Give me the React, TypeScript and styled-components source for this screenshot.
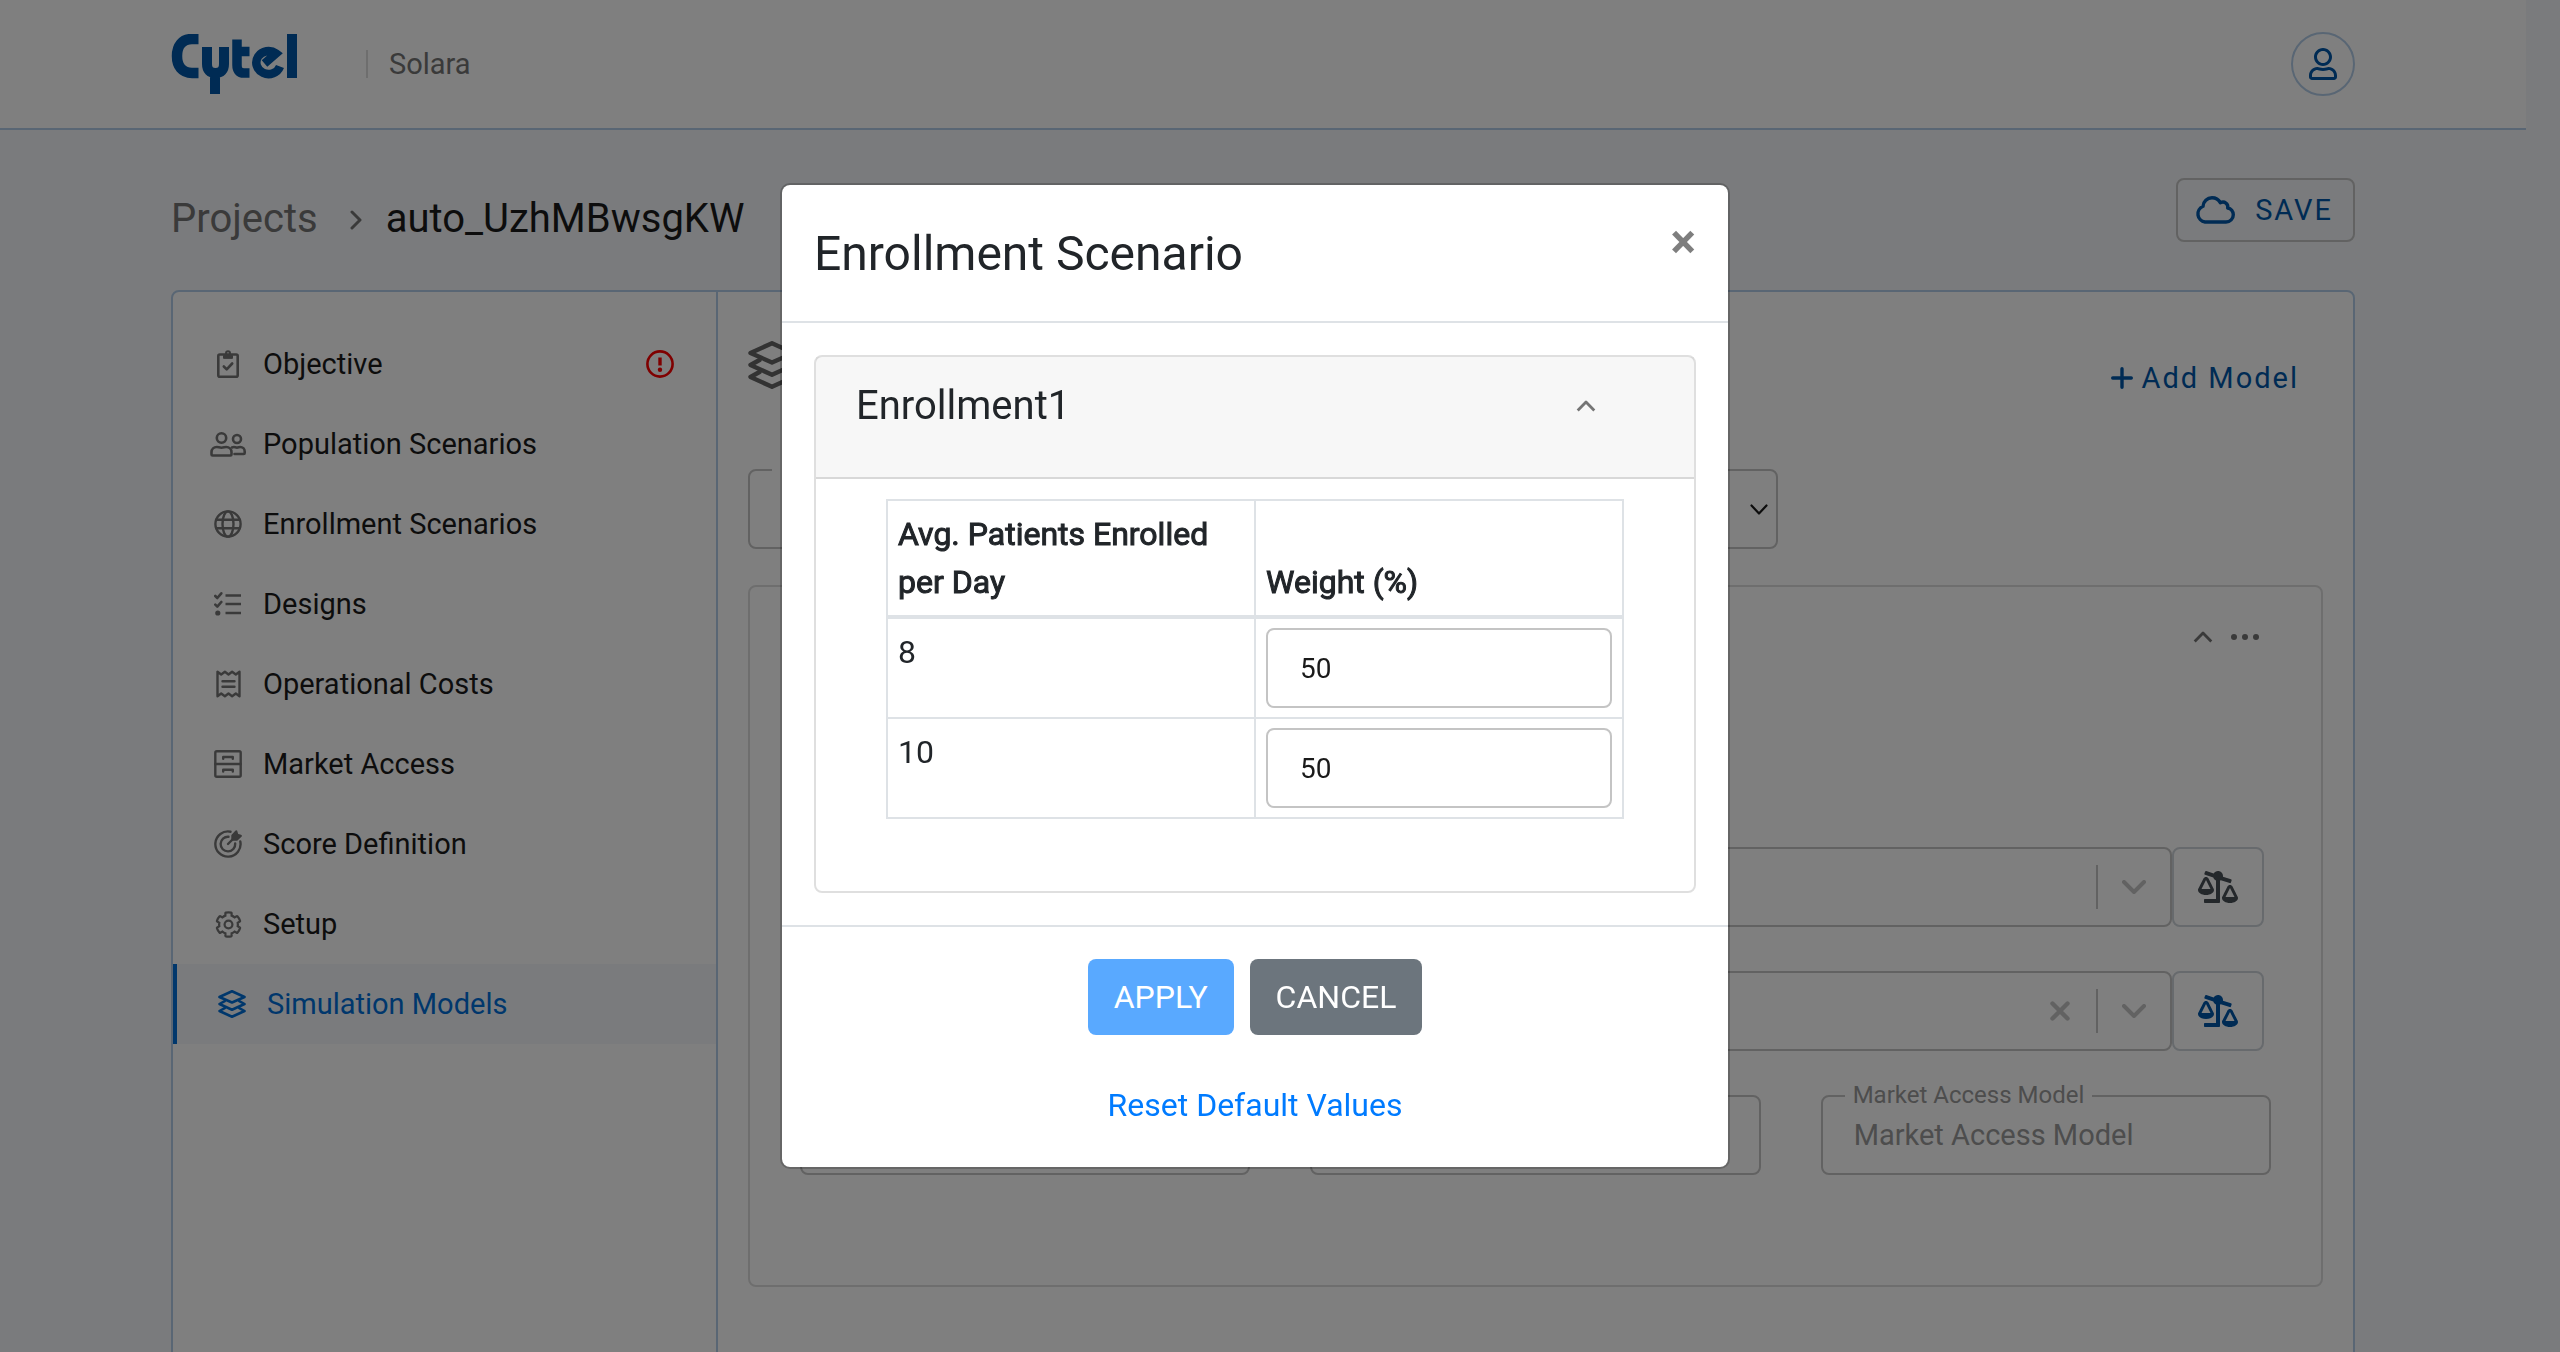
import React from 'react';
import styled, { createGlobalStyle } from 'styled-components';
import { FaBalanceScaleRight, FaCog, FaRegUser } from 'react-icons/fa';

const color = {
  brand: '#0057a8',
  active: '#006fd9',
  line: '#b3cde8',
  page: '#f4f7fa',
  field: '#c4c4c4',
  card: '#dddddd',
  text: '#1a1a1a',
  muted: '#757575',
  grid: '#dee2e6',
  body: '#212529',
};

const GlobalStyle = createGlobalStyle`
  *, *::before, *::after { box-sizing: border-box; }
  html, body { margin: 0; height: 100%; }
  body {
    background: ${color.page};
    color: ${color.text};
    font-family: Roboto, "Liberation Sans", sans-serif;
    font-size: 29px;
    overflow: hidden;
  }
  button, input, select { font-family: inherit; }
  svg { display: block; flex: none; }
`;

/* ---------- page shell ---------- */

const Page = styled.div`
  min-height: 100vh;
  padding-right: 34px;
`;

const Header = styled.header`
  display: flex;
  align-items: center;
  height: 130px;
  padding: 0 171px;
  background: #fff;
  border-bottom: 2px solid ${color.line};
`;

const Product = styled.span`
  display: flex;
  align-items: center;
  gap: 21px;
  margin-left: 69px;
  color: ${color.muted};

  &::before {
    content: '';
    width: 2px;
    height: 28px;
    background: ${color.card};
  }
`;

const UserButton = styled.button`
  display: flex;
  align-items: center;
  justify-content: center;
  width: 64px;
  height: 64px;
  margin-left: auto;
  padding: 0;
  color: ${color.brand};
  background: none;
  border: 2px solid ${color.line};
  border-radius: 50%;
`;

const Content = styled.div`
  padding: 48px 171px 0;
`;

const TitleRow = styled.div`
  display: flex;
  align-items: flex-start;
  justify-content: space-between;
  height: 112px;
`;

const Breadcrumb = styled.nav`
  display: flex;
  align-items: center;
  font-size: 40px;
  line-height: 82px;
  color: ${color.text};

  a {
    color: ${color.muted};
    text-decoration: none;
  }

  svg {
    margin: 2px 24px 0 32px;
    color: ${color.muted};
  }
`;

const SaveButton = styled.button`
  display: flex;
  align-items: center;
  gap: 20px;
  height: 64px;
  padding: 0 20px 0 17px;
  font-size: 29px;
  letter-spacing: 2px;
  color: ${color.brand};
  background: none;
  border: 2px solid ${color.field};
  border-radius: 8px;
`;

const Panel = styled.div`
  display: flex;
  min-height: 1080px;
  background: #fff;
  border: 2px solid ${color.line};
  border-radius: 8px;
`;

/* ---------- side navigation ---------- */

const Sidebar = styled.nav`
  flex: none;
  width: 545px;
  padding-top: 32px;
  border-right: 2px solid ${color.line};
`;

const NavItem = styled.a<{ $active?: boolean }>`
  display: flex;
  align-items: center;
  gap: 16px;
  height: 80px;
  padding: 0 42px 0 36px;
  color: ${(p) => (p.$active ? color.active : color.text)};
  background: ${(p) => (p.$active ? color.page : 'none')};
  border-left: ${(p) => (p.$active ? `4px solid ${color.active}` : '0')};
  text-decoration: none;
`;

const NavIcon = styled.span<{ $active?: boolean }>`
  display: flex;
  justify-content: center;
  width: 38px;
  color: ${(p) => (p.$active ? color.active : color.muted)};
`;

const NavLabel = styled.span`
  flex: 1;
`;

/* ---------- main column ---------- */

const Main = styled.main`
  flex: 1;
  min-width: 0;
  padding: 49px 30px;
`;

const MainHeader = styled.div`
  display: flex;
  align-items: flex-start;
  justify-content: space-between;
  height: 128px;
  color: #666;
`;

const AddButton = styled.button`
  display: flex;
  align-items: center;
  gap: 9px;
  height: 74px;
  padding: 0 24px;
  font-size: 29px;
  letter-spacing: 2px;
  color: ${color.brand};
  background: none;
  border: 0;
`;

const Outline = styled.fieldset`
  position: relative;
  display: flex;
  align-items: center;
  min-width: 0;
  height: 80px;
  margin: 0;
  padding: 0;
  border: 2px solid ${color.field};
  border-radius: 8px;
`;

const ModelPicker = styled(Outline)`
  max-width: 1030px;
  padding-right: 8px;
`;

/* The gap that a floating label leaves in the top line of its field. */
const Notch = styled.span`
  position: absolute;
  top: -14px;
  left: 22px;
  min-width: 180px;
  height: 28px;
  padding: 0 8px;
  font-size: 24px;
  line-height: 24px;
  color: #9a9a9a;
  background: #fff;
`;

const PlainSelect = styled.select`
  flex: 1;
  min-width: 0;
  height: 100%;
  padding: 0 30px;
  font-size: 29px;
  appearance: none;
  background: none;
  border: 0;
`;

const ModelCard = styled.section`
  margin-top: 36px;
  padding: 0 50px 110px;
  border: 2px solid ${color.card};
  border-radius: 8px;
`;

const CardTools = styled.div`
  display: flex;
  align-items: center;
  justify-content: flex-end;
  gap: 18px;
  height: 100px;
  margin-bottom: 160px;
  padding-right: 12px;
`;

const IconButton = styled.button`
  padding: 0;
  color: ${color.muted};
  background: none;
  border: 0;
`;

const ScenarioRow = styled.div`
  display: flex;
  margin-bottom: 44px;
  padding-right: 7px;
`;

const ScenarioField = styled(Outline)`
  flex: 1;
  padding-right: 24px;
  color: ${color.field};
`;

const Separator = styled.span`
  width: 2px;
  height: 44px;
  margin: 0 24px 0 26px;
  background: ${color.field};
`;

const WeightButton = styled.button<{ $on?: boolean }>`
  display: flex;
  align-items: center;
  justify-content: center;
  width: 92px;
  height: 80px;
  padding: 0;
  color: ${(p) => (p.$on ? color.brand : '#495057')};
  background: none;
  border: 2px solid #ced4da;
  border-radius: 8px;

  svg {
    width: 40px;
    height: 32px;
  }
`;

const FieldRow = styled.div`
  display: grid;
  grid-template-columns: repeat(3, 1fr);
  gap: 60px;
`;

const FieldInput = styled.input`
  width: 100%;
  height: 100%;
  padding: 0 31px;
  font-size: 29px;
  color: #9a9a9a;
  background: none;
  border: 0;
`;

/* ---------- modal ---------- */

const Backdrop = styled.div`
  position: fixed;
  inset: 0;
  display: flex;
  align-items: center;
  justify-content: center;
  padding-right: 50px;
  background: rgba(0, 0, 0, 0.5);
`;

const Dialog = styled.div`
  width: 950px;
  max-width: 100%;
  font-size: 32px;
  line-height: 48px;
  color: ${color.body};
  background: #fff;
  background-clip: padding-box;
  border: 2px solid rgba(0, 0, 0, 0.2);
  border-radius: 10px;
`;

const DialogHeader = styled.div`
  display: flex;
  align-items: flex-start;
  justify-content: space-between;
  padding: 33px 32px 31px;
  border-bottom: 2px solid ${color.grid};

  h4 {
    margin: 0;
    font-size: 48px;
    font-weight: 400;
    line-height: 72px;
  }
`;

const CloseButton = styled.button`
  padding: 0;
  font-size: 48px;
  font-weight: 700;
  line-height: 48px;
  color: #000;
  background: none;
  border: 0;
  opacity: 0.5;
`;

const DialogBody = styled.div`
  padding: 32px;
`;

const Accordion = styled.div`
  border: 2px solid rgba(0, 0, 0, 0.125);
  border-radius: 8px;
`;

const AccordionHeader = styled.div`
  display: flex;
  justify-content: space-between;
  align-items: center;
  padding: 25px 98px 47px 40px;
  background: rgba(0, 0, 0, 0.03);
  border-bottom: 2px solid rgba(0, 0, 0, 0.125);

  h5 {
    margin: 0;
    font-size: 40px;
    font-weight: 400;
    line-height: 48px;
  }
`;

const AccordionBody = styled.div`
  padding: 20px 70px 72px;
`;

const WeightTable = styled.table`
  width: 100%;
  table-layout: fixed;
  border-collapse: separate;
  border-spacing: 0;
  border-top: 2px solid ${color.grid};
  border-left: 2px solid ${color.grid};

  th,
  td {
    padding: 9px 10px;
    text-align: left;
    vertical-align: top;
    border-right: 2px solid ${color.grid};
    border-bottom: 2px solid ${color.grid};
  }

  th {
    font-weight: 400;
    -webkit-text-stroke: 1px ${color.body};
    vertical-align: bottom;
    border-bottom-width: 4px;
  }
`;

const WeightInput = styled.input`
  display: block;
  width: 100%;
  height: 80px;
  padding: 0 32px;
  font-size: 28px;
  color: ${color.text};
  background: #fff;
  border: 2px solid ${color.field};
  border-radius: 8px;
`;

const DialogFooter = styled.div`
  display: flex;
  flex-direction: column;
  align-items: center;
  gap: 32px;
  padding: 32px 32px 24px;
  border-top: 2px solid ${color.grid};
`;

const ButtonGroup = styled.div`
  display: flex;
  gap: 16px;
`;

const Button = styled.button<{ $tone: 'primary' | 'secondary' | 'link' }>`
  height: 76px;
  padding: 0 26px;
  font-size: 32px;
  line-height: 48px;
  color: ${(p) => (p.$tone === 'link' ? '#007bff' : '#fff')};
  background: ${(p) =>
    p.$tone === 'primary' ? '#007bff' : p.$tone === 'secondary' ? '#6c757d' : 'none'};
  border: 0;
  border-radius: 8px;

  &:disabled {
    opacity: 0.65;
  }
`;

/* ---------- drawings ---------- */

const Line = ({
  w,
  h,
  stroke = 2.6,
  size,
  children,
}: {
  w: number;
  h: number;
  stroke?: number;
  size?: number;
  children: React.ReactNode;
}) => (
  <svg
    width={size ? (size * w) / h : w}
    height={size ?? h}
    viewBox={`0 0 ${w} ${h}`}
    fill="none"
    stroke="currentColor"
    strokeWidth={stroke}
    strokeLinecap="round"
    strokeLinejoin="round"
    aria-hidden="true"
  >
    {children}
  </svg>
);

const Logo = () => (
  <svg width="126" height="60" viewBox="0 0 126 60" fill="none" stroke={color.brand} role="img" aria-label="Cytel">
    <path d="M27.5 5H21C11 5 6 12 6 22s5 17 15 17h6.500" strokeWidth="10.500" />
    <path d="M36 13v17c0 6 3 9 8.500 9s8.500-3 8.500-9V13M44 38v22" strokeWidth="10" />
    <path d="M66 5.500V31c0 5 2 8 7 8h5.500M66 17.500h12.500" strokeWidth="9.500" />
    <path d="M109 32.500A12.200 11.500 0 1 1 105 19.500L93.500 29.500" strokeWidth="8.500" />
    <path d="M121 0v44" strokeWidth="10" />
  </svg>
);

const LayersIcon = ({ size }: { size: number }) => (
  <Line w={48} h={48} stroke={4.4} size={size}>
    <path d="M24 2.200 45.500 12 24 21.500 2.500 12z" />
    <path d="M11.500 19 2.500 24 24 33.800 45.500 24l-9-5" />
    <path d="M11.500 31 2.500 36 24 45.800 45.500 36l-9-5" />
  </Line>
);

const ClipboardIcon = () => (
  <Line w={22} h={28}>
    <rect x="1.300" y="4.500" width="19.400" height="22.200" rx="1.500" />
    <path d="M6.500 8V5.500h9V8z" fill="currentColor" strokeWidth="1" />
    <circle cx="11" cy="3.200" r="2" strokeWidth="2" />
    <path d="m6.800 16.500 2.900 2.900 5.500-5.900" />
  </Line>
);

const PeopleIcon = () => (
  <Line w={36} h={28}>
    <circle cx="11.500" cy="8" r="4.700" />
    <path d="M1.500 24.500v-2.200c0-3.300 2.400-5.300 5.300-5.300 1.500 0 2.600.8 4.700.8s3.200-.8 4.700-.8c2.900 0 5.300 2 5.300 5.300v2.200c0 .6-.4 1-1 1H2.500c-.6 0-1-.4-1-1z" />
    <circle cx="27" cy="9" r="4" />
    <path d="M22 17.500c.6-.3 1.200-.5 1.900-.5 1.100 0 1.700.6 3.100.6s2-.6 3.100-.6c2.600 0 4.600 1.900 4.600 4.600v1.400c0 .6-.4 1-1 1h-9.200" />
  </Line>
);

const GlobeIcon = () => (
  <Line w={28} h={28} stroke={2.4}>
    <circle cx="14" cy="14" r="12.600" />
    <ellipse cx="14" cy="14" rx="5.500" ry="12.600" />
    <path d="M2.500 9.800h23M2.500 18.200h23" />
  </Line>
);

const ChecklistIcon = () => (
  <Line w={28} h={28}>
    <path d="M11.500 5.500H27M11.500 14H27M11.500 23H27" strokeLinecap="butt" />
    <path d="m1.300 6 2 2 4-4.700M1.300 14.700l2 2 4-4.700" />
    <circle cx="3.800" cy="23" r="1.300" fill="currentColor" />
  </Line>
);

const ReceiptIcon = () => (
  <Line w={25} h={28} stroke={2.4}>
    <path d="M1.500 1.700v24.600l3.700-2.800 3.700 2.800 3.600-2.800 3.600 2.800 3.700-2.800 3.700 2.800V1.700l-3.700 2.800-3.700-2.800-3.600 2.800-3.600-2.800-3.700 2.800z" />
    <path d="M6.500 11.200h12M6.500 16.800h12" />
  </Line>
);

const CabinetIcon = () => (
  <Line w={28} h={28} stroke={2.4}>
    <rect x="1.300" y="1.300" width="25.400" height="25.400" rx="1.500" />
    <path d="M1.300 14h25.400M9.200 8.800V7h9.600v1.800M9.200 21.500v-1.800h9.600v1.800" />
  </Line>
);

const TargetIcon = () => (
  <Line w={28} h={28} stroke={2.4}>
    <path d="M16.500 1.700A12.600 12.600 0 1 0 26.300 11.500" />
    <path d="M14.500 6.800a7.300 7.300 0 1 0 6.700 6.700" />
    <path d="m14 14 7-7" />
    <path d="m18.500 5.500 3.700-4 1 3.300 3.500 1-4 3.700h-4.200z" fill="currentColor" />
  </Line>
);

const AlertIcon = () => (
  <svg width="28" height="28" viewBox="0 0 28 28" fill="none" stroke="#f00" role="img" aria-label="Needs attention">
    <circle cx="14" cy="14" r="12.600" strokeWidth="2.600" />
    <path d="M14 7.500v8" strokeWidth="3.400" />
    <circle cx="14" cy="19.700" r="2.200" fill="#f00" stroke="none" />
  </svg>
);

const CloudIcon = () => (
  <Line w={40} h={28} stroke={3.4}>
    <path d="M10 26a8.200 8.200 0 0 1-2-15.700C8.300 5.300 12.200 1.800 17 1.800c3.600 0 6.600 1.800 8.300 4.900 4.200-2 8.300 1.100 7.400 5.300 3.400.6 5.600 3.400 5.600 6.800 0 4-3.200 7.200-7.300 7.200z" />
  </Line>
);

const ChevronUp = () => (
  <Line w={20} h={12} stroke={2.8}>
    <path d="m1.700 10.500 8.300-8.500 8.300 8.500" strokeLinecap="butt" />
  </Line>
);

const ClearIcon = () => (
  <Line w={20} h={20} stroke={4.4}>
    <path d="m2.500 2.500 15 15m0-15-15 15" stroke={color.field} />
  </Line>
);

const CogIcon = () => (
  <FaCog size={25} fill="none" strokeWidth={46} overflow="visible" aria-hidden="true" />
);

/* ---------- data ---------- */

const navItems = [
  { label: 'Objective', icon: <ClipboardIcon />, alert: true },
  { label: 'Population Scenarios', icon: <PeopleIcon /> },
  { label: 'Enrollment Scenarios', icon: <GlobeIcon /> },
  { label: 'Designs', icon: <ChecklistIcon /> },
  { label: 'Operational Costs', icon: <ReceiptIcon /> },
  { label: 'Market Access', icon: <CabinetIcon /> },
  { label: 'Score Definition', icon: <TargetIcon /> },
  { label: 'Setup', icon: <CogIcon /> },
  { label: 'Simulation Models', icon: <LayersIcon size={28} />, active: true },
];

const weights = [
  { patients: 8, weight: 50 },
  { patients: 10, weight: 50 },
];

const ScenarioSelect = ({ name, clearable }: { name: string; clearable?: boolean }) => (
  <ScenarioRow>
    <ScenarioField>
      <PlainSelect aria-label={name} />
      {clearable && (
        <IconButton type="button" aria-label={`Clear ${name}`}>
          <ClearIcon />
        </IconButton>
      )}
      <Separator />
      <Line w={24} h={14} stroke={4}>
        <path d="m2 2 10 10L22 2" />
      </Line>
    </ScenarioField>
    <WeightButton type="button" $on={clearable} aria-label={`${name} weights`}>
      <FaBalanceScaleRight />
    </WeightButton>
  </ScenarioRow>
);

export default function App() {
  return (
    <>
      <GlobalStyle />
      <Page>
        <Header>
          <Logo />
          <Product>Solara</Product>
          <UserButton type="button" aria-label="Account">
            <FaRegUser size={32} />
          </UserButton>
        </Header>

        <Content>
          <TitleRow>
            <Breadcrumb aria-label="Breadcrumb">
              <a href="#projects">Projects</a>
              <Line w={12} h={20} stroke={3}>
                <path d="m2 2 8 8-8 8" />
              </Line>
              <span>auto_UzhMBwsgKW</span>
            </Breadcrumb>
            <SaveButton type="button">
              <CloudIcon />
              SAVE
            </SaveButton>
          </TitleRow>

          <Panel>
            <Sidebar aria-label="Project sections">
              {navItems.map((item) => (
                <NavItem key={item.label} href="#section" $active={item.active}>
                  <NavIcon $active={item.active}>{item.icon}</NavIcon>
                  <NavLabel>{item.label}</NavLabel>
                  {item.alert && <AlertIcon />}
                </NavItem>
              ))}
            </Sidebar>

            <Main>
              <MainHeader>
                <LayersIcon size={48} />
                <AddButton type="button">
                  <Line w={22} h={22} stroke={3.4}>
                    <path d="M11 1.700v18.600M1.700 11h18.600" />
                  </Line>
                  Add Model
                </AddButton>
              </MainHeader>

              <ModelPicker>
                <Notch />
                <PlainSelect aria-label="Model" />
                <Line w={18} h={11} stroke={2.2}>
                  <path d="m1.500 1.500 7.500 8 7.500-8" />
                </Line>
              </ModelPicker>

              <ModelCard>
                <CardTools>
                  <IconButton type="button" aria-label="Collapse model">
                    <ChevronUp />
                  </IconButton>
                  <IconButton type="button" aria-label="More actions">
                    <svg width="28" height="6" viewBox="0 0 28 6" fill="currentColor" aria-hidden="true">
                      <circle cx="3" cy="3" r="3" />
                      <circle cx="14" cy="3" r="3" />
                      <circle cx="25" cy="3" r="3" />
                    </svg>
                  </IconButton>
                </CardTools>

                <ScenarioSelect name="Population scenario" />
                <ScenarioSelect name="Enrollment scenario" clearable />

                <FieldRow>
                  <Outline>
                    <FieldInput aria-label="Design" disabled />
                  </Outline>
                  <Outline>
                    <FieldInput aria-label="Operational cost" disabled />
                  </Outline>
                  <Outline>
                    <Notch as="label" htmlFor="market-access-model">
                      Market Access Model
                    </Notch>
                    <FieldInput id="market-access-model" defaultValue="Market Access Model" disabled />
                  </Outline>
                </FieldRow>
              </ModelCard>
            </Main>
          </Panel>
        </Content>
      </Page>

      <Backdrop>
        <Dialog role="dialog" aria-modal="true" aria-labelledby="dialog-title">
          <DialogHeader>
            <h4 id="dialog-title">Enrollment Scenario</h4>
            <CloseButton type="button" aria-label="Close">
              ×
            </CloseButton>
          </DialogHeader>

          <DialogBody>
            <Accordion>
              <AccordionHeader>
                <h5>Enrollment1</h5>
                <IconButton type="button" aria-label="Collapse Enrollment1">
                  <ChevronUp />
                </IconButton>
              </AccordionHeader>
              <AccordionBody>
                <WeightTable>
                  <thead>
                    <tr>
                      <th scope="col">Avg. Patients Enrolled per Day</th>
                      <th scope="col">Weight (%)</th>
                    </tr>
                  </thead>
                  <tbody>
                    {weights.map((row) => (
                      <tr key={row.patients}>
                        <td>{row.patients}</td>
                        <td>
                          <WeightInput
                            type="text"
                            aria-label={`Weight for ${row.patients} patients per day`}
                            defaultValue={row.weight}
                          />
                        </td>
                      </tr>
                    ))}
                  </tbody>
                </WeightTable>
              </AccordionBody>
            </Accordion>
          </DialogBody>

          <DialogFooter>
            <ButtonGroup>
              <Button type="button" $tone="primary" disabled>
                APPLY
              </Button>
              <Button type="button" $tone="secondary">
                CANCEL
              </Button>
            </ButtonGroup>
            <Button type="button" $tone="link">
              Reset Default Values
            </Button>
          </DialogFooter>
        </Dialog>
      </Backdrop>
    </>
  );
}
